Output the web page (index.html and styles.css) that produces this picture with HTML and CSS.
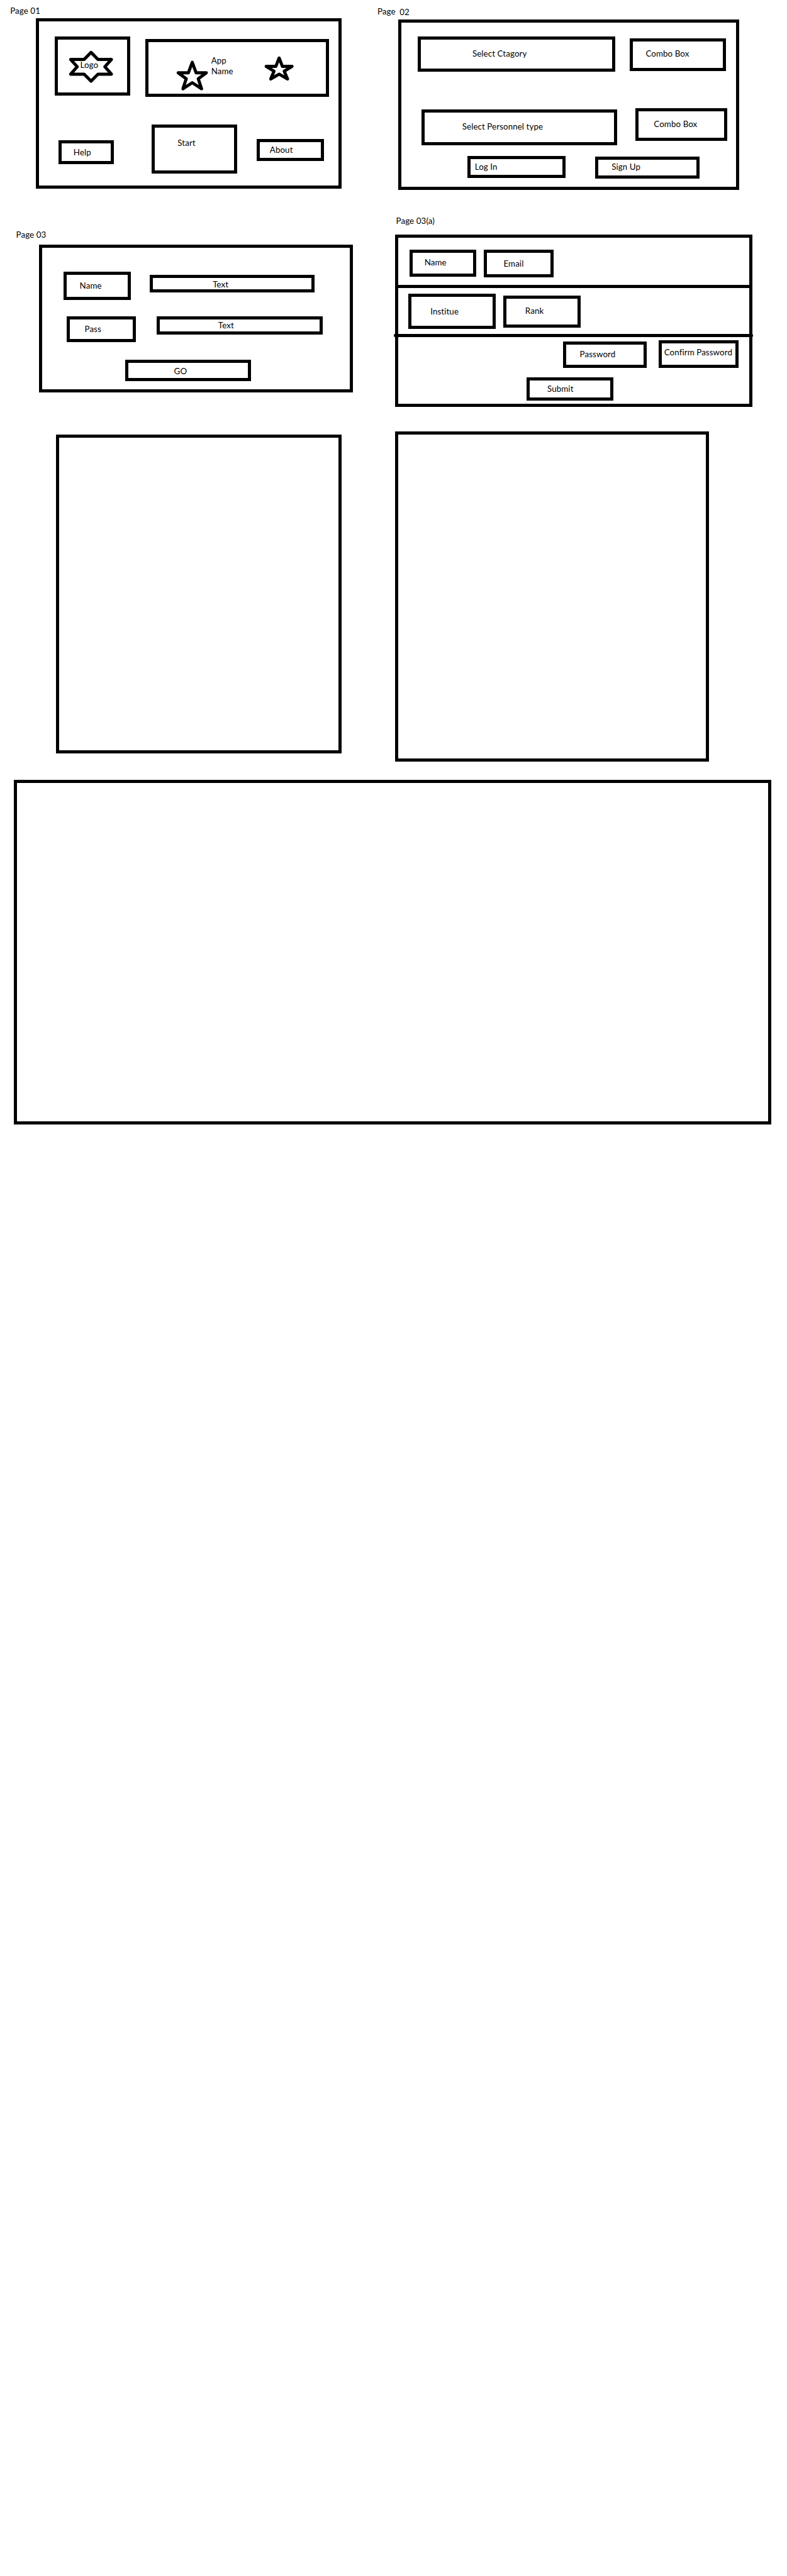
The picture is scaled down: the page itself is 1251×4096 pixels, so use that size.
FILE: index.html
```html
<!DOCTYPE html>
<html lang="en">
<head>
<meta charset="utf-8">
<title>App wireframes</title>
<link rel="stylesheet" href="styles.css">
</head>
<body>
<main>
  <div class="columns">
    <div class="left">
      <h2 class="label label-01">Page 01</h2>
      <section class="box page-01">
        <div class="row row-brand">
          <div class="box logo">
            <svg viewBox="96.2 66.2 115.5 87.5">
              <path class="stroke" d="M151.5 87.5L163 99.3H185.5L174.5 111.5L185.5 123.8H163L151.5 135.5L140 123.8H117.5L128.5 111.5L117.5 99.3H140Z"/>
              <text x="133.4" y="113.3">Logo</text>
            </svg>
          </div>
          <div class="box app">
            <svg class="star-big" viewBox="290 95 60 60"><path class="stroke" d="M320 103.5L326.500 121H343.500L330 131L335.500 147.500L320 137.500L304.500 147.500L310 131L296.500 121H313.500Z"/></svg>
            <p class="app-name">App<br>Name</p>
            <svg class="star-small" viewBox="437 90 56 50"><path class="stroke" d="M465 96.500L470.500 110.500H486.500L473.500 118.500L479 131.500L465 123.500L451 131.500L456.500 118.500L443.500 110.500H459.500Z"/></svg>
          </div>
        </div>
        <div class="row">
          <div class="box help">Help</div>
          <div class="box start">Start</div>
          <div class="box about">About</div>
        </div>
      </section>

      <h2 class="label label-03">Page 03</h2>
      <section class="box page-03">
        <div class="row row-name">
          <div class="box name">Name</div>
          <div class="box name-text">Text</div>
        </div>
        <div class="row row-pass">
          <div class="box pass">Pass</div>
          <div class="box pass-text">Text</div>
        </div>
        <div class="row">
          <div class="box go">GO</div>
        </div>
      </section>

      <section class="box blank-left"></section>
    </div>

    <div class="right">
      <h2 class="label label-02"><span>Page</span><span class="number">02</span></h2>
      <section class="box page-02">
        <div class="row row-category">
          <div class="box category">Select Ctagory</div>
          <div class="box category-combo">Combo Box</div>
        </div>
        <div class="row row-personnel">
          <div class="box personnel">Select Personnel type</div>
          <div class="box personnel-combo">Combo Box</div>
        </div>
        <div class="row">
          <div class="box login">Log In</div>
          <div class="box signup">Sign Up</div>
        </div>
      </section>

      <h2 class="label label-03a">Page 03(a)</h2>
      <section class="box page-03a">
        <div class="row row-identity">
          <div class="box full-name">Name</div>
          <div class="box email">Email</div>
        </div>
        <div class="row row-work">
          <div class="box institute">Institue</div>
          <div class="box rank">Rank</div>
        </div>
        <hr class="divider">
        <div class="row row-password">
          <div class="box password">Password</div>
          <div class="box confirm">Confirm Password</div>
        </div>
        <div class="row">
          <div class="box submit">Submit</div>
        </div>
      </section>

      <section class="box blank-right"></section>
    </div>
  </div>
  <section class="box blank-wide"></section>
</main>
</body>
</html>
```
FILE: styles.css
```css
/* 1rem is ten drawing units */
html { font-size: 9.535px; background: #fff; }
* { box-sizing: border-box; }
body { margin: 0; }
main {
  height: 4096px;
  overflow: hidden;
  color: #000;
  font: 1.4rem/1.8rem Lato, Carlito, sans-serif;
  letter-spacing: .01rem;
  white-space: nowrap;
}
.columns { display: flex; align-items: flex-start; }
.left { width: 62rem; flex: none; }
.right { width: 69.2rem; flex: none; }
.box { border: 5px solid #000; flex: none; }
.row { display: flex; align-items: flex-start; }
.label { margin: 0; font: inherit; }
svg { display: block; flex: none; }
svg text { font-size: 14px; }
.stroke { fill: none; stroke: #000; stroke-width: 5.2; stroke-linejoin: round; }

.label-01 { height: 3rem; padding: .92rem 0 0 1.7rem; }
.label-02 { height: 3.2rem; padding: 1.02rem 0 0 .92rem; display: flex; gap: .7rem; }
.label-02 .number { margin-top: .1rem; }
.label-03 { height: 9.3rem; padding: 6.82rem 0 0 2.68rem; }
.label-03a { height: 7.4rem; padding: 4.32rem 0 0 4.03rem; }

.page-01 { margin-left: 6rem; width: 50.9rem; height: 28.5rem; }
.row-brand { height: 16.5rem; }
.logo { margin: 2.58rem 0 0 2.58rem; width: 12.6rem; height: 9.8rem; }
.logo svg { width: 11.55rem; height: 8.75rem; }
.app { display: flex; align-items: flex-start; margin: 2.98rem 0 0 2.5rem; width: 30.7rem; height: 9.7rem; }
.star-big { width: 6rem; height: 6rem; margin: 2.48rem 0 0 4.28rem; }
.app-name { width: 8.5rem; margin: 2.22rem 0 0 .2rem; }
.star-small { width: 5.6rem; height: 5rem; margin-top: 1.98rem; }
.help { margin: 3.38rem 0 0 3.18rem; width: 9.3rem; height: 4rem; padding: .6rem 0 0 2.03rem; }
.start { margin: .78rem 0 0 6.3rem; width: 14.2rem; height: 8.1rem; padding: 1.6rem 0 0 3.78rem; }
.about { margin: 3.18rem 0 0 3.3rem; width: 11.2rem; height: 3.7rem; padding: .4rem 0 0 1.65rem; }

.page-02 { margin-left: 4.4rem; width: 56.8rem; height: 28.5rem; }
.row-category { height: 13rem; }
.category { margin: 2.38rem 0 0 2.68rem; width: 33rem; height: 5.9rem; padding: 1.5rem 0 0 8.63rem; }
.category-combo { margin: 2.68rem 0 0 2.4rem; width: 16rem; height: 5.4rem; padding: 1.1rem 0 0 2.13rem; }
.row-personnel { height: 8.5rem; }
.personnel { margin: 1.48rem 0 0 3.38rem; width: 32.6rem; height: 6rem; padding: 1.5rem 0 0 6.23rem; }
.personnel-combo { margin: 1.28rem 0 0 3rem; width: 15.3rem; height: 5.5rem; padding: 1.3rem 0 0 2.58rem; }
.login { margin: .78rem 0 0 10.98rem; width: 16.4rem; height: 3.7rem; padding: .4rem 0 0 .73rem; }
.signup { margin: .88rem 0 0 4.9rem; width: 17.4rem; height: 3.7rem; padding: .3rem 0 0 2.23rem; }

.page-03 { margin-left: 6.5rem; width: 52.3rem; height: 24.6rem; }
.row-name { height: 10rem; }
.name { margin: 3.98rem 0 0 3.58rem; width: 11.2rem; height: 4.7rem; padding: .9rem 0 0 2.15rem; }
.name-text { margin: 4.48rem 0 0 3.2rem; width: 27.4rem; height: 3rem; padding: .2rem 0 0 9.95rem; }
.row-pass { height: 7.5rem; }
.pass { margin: 1.48rem 0 0 4.08rem; width: 11.5rem; height: 4.2rem; padding: .7rem 0 0 2.48rem; }
.pass-text { margin: 1.48rem 0 0 3.5rem; width: 27.7rem; height: 3rem; padding: .1rem 0 0 9.75rem; }
.go { margin: 1.18rem 0 0 13.88rem; width: 20.9rem; height: 3.6rem; padding: .5rem 0 0 7.58rem; }

.page-03a { margin-left: 3.9rem; width: 59.5rem; height: 28.8rem; }
.row-identity { height: 8.38rem; border-bottom: 5px solid #000; }
.full-name { margin: 1.98rem 0 0 1.88rem; width: 11.1rem; height: 4.5rem; padding: .8rem 0 0 1.93rem; }
.email { margin: 1.98rem 0 0 1.3rem; width: 11.6rem; height: 4.6rem; padding: 1rem 0 0 2.73rem; }
.row-work { height: 7.7rem; }
.institute { margin: 1rem 0 0 1.68rem; width: 14.5rem; height: 5.9rem; padding: 1.5rem 0 0 3.13rem; }
.rank { margin: 1.3rem 0 0 1.3rem; width: 12.9rem; height: 5.3rem; padding: 1.1rem 0 0 3.13rem; }
.divider { width: 59.9rem; height: 5px; margin: 0 0 0 -.82rem; border: 0; border-radius: 2px; background: #000; }
.row-password { height: 6rem; }
.password { margin: .68rem 0 0 27.48rem; width: 13.9rem; height: 4.4rem; padding: .8rem 0 0 2.23rem; }
.confirm { margin: .48rem 0 0 2rem; width: 13.3rem; height: 4.7rem; padding: .7rem 0 0 .4rem; }
.submit { margin: .68rem 0 0 21.38rem; width: 14.5rem; height: 3.9rem; padding: .5rem 0 0 2.92rem; }

.blank-left { margin: 7.1rem 0 0 9.3rem; width: 47.7rem; height: 53.1rem; }
.blank-right { margin: 4rem 0 0 3.9rem; width: 52.3rem; height: 55.1rem; }
.blank-wide { margin: 3.1rem 0 0 2.3rem; width: 126.3rem; height: 57.4rem; }
```
